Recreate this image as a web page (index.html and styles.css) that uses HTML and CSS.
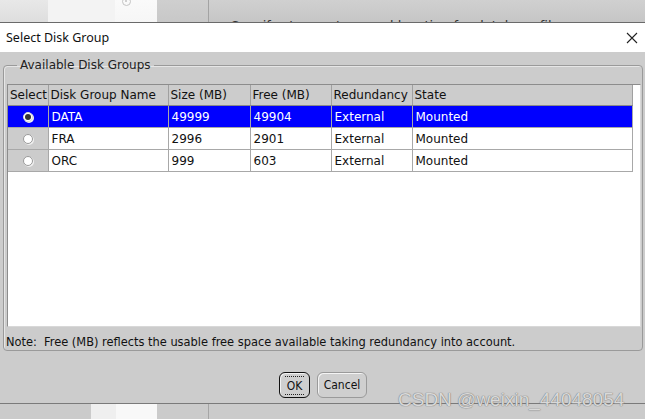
FILE: index.html
```html
<!DOCTYPE html>
<html>
<head>
<meta charset="utf-8">
<link rel="stylesheet" href="styles.css">
</head>
<body>
<div class="desk">
  <div class="desk-top">
    <div class="s s1"></div>
    <div class="s s2"></div>
    <div class="s s3"><span class="ring"></span></div>
    <div class="s s4"></div>
    <div class="s s5"><div class="hidden-text">Specify storage type and location for database files</div></div>
  </div>
  <div class="desk-mid"></div>
  <div class="desk-bottom">
    <div class="s b1"></div>
    <div class="s b2"></div>
    <div class="s b3"></div>
    <div class="s b4"></div>
    <div class="s b5"></div>
  </div>
</div>

<div class="dialog">
  <div class="titlebar">
    <span class="title">Select Disk Group</span>
    <svg class="close" width="12" height="12" viewBox="0 0 12 12"><path d="M1 1 L11 11 M11 1 L1 11" stroke="#222" stroke-width="1.1" fill="none"/></svg>
  </div>
  <div class="body">
    <fieldset class="group">
      <legend>Available Disk Groups</legend>
      <div class="tablebox">
        <table class="grid">
          <colgroup>
            <col class="c-sel"><col class="c-name"><col class="c-size"><col class="c-free"><col class="c-red"><col class="c-state">
          </colgroup>
          <thead>
            <tr>
              <th>Select</th>
              <th>Disk Group Name</th>
              <th>Size (MB)</th>
              <th>Free (MB)</th>
              <th>Redundancy</th>
              <th>State</th>
            </tr>
          </thead>
          <tbody>
            <tr class="selected">
              <td class="sel"><span class="radio on"></span></td>
              <td>DATA</td><td>49999</td><td>49904</td><td>External</td><td>Mounted</td>
            </tr>
            <tr>
              <td class="sel"><span class="radio"></span></td>
              <td>FRA</td><td>2996</td><td>2901</td><td>External</td><td>Mounted</td>
            </tr>
            <tr>
              <td class="sel"><span class="radio"></span></td>
              <td>ORC</td><td>999</td><td>603</td><td>External</td><td>Mounted</td>
            </tr>
          </tbody>
        </table>
      </div>
      <div class="note">Note:&nbsp; Free (MB) reflects the usable free space available taking redundancy into account.</div>
    </fieldset>
    <div class="buttons">
      <button class="btn ok"><span class="focus">OK</span></button>
      <button class="btn cancel">Cancel</button>
    </div>
  </div>
</div>

<div class="watermark">CSDN @weixin_44048054</div>
</body>
</html>
```

FILE: styles.css
```css
html, body {
  margin: 0;
  padding: 0;
}
body {
  width: 645px;
  height: 419px;
  overflow: hidden;
  position: relative;
  background: #cbcbcb;
  font-family: "DejaVu Sans", sans-serif;
}

/* desktop behind the dialog */
.desk {
  display: flex;
  flex-direction: column;
  height: 419px;
}
.desk-top {
  height: 22px;
  display: flex;
}
.desk-mid {
  flex: 1;
}
.desk-bottom {
  height: 16px;
  display: flex;
}
.s { height: 100%; }
.s1 { width: 48px; background: linear-gradient(#e8e8e8, #dedede); }
.s2 { width: 67px; background: #f3f3f3; }
.s3 { width: 42px; background: linear-gradient(#fafafa, #f6f6f6); position: relative; }
.s4 { width: 51px; background: linear-gradient(#cfcfcf, #c8c8c8); border-right: 1px solid #a3a3a3; }
.s5 { flex: 1; background: linear-gradient(#d0d0d0, #c6c6c6); overflow: hidden; }
.ring {
  position: absolute;
  left: 7px;
  top: -3px;
  width: 9px;
  height: 9px;
  border: 1.5px solid #c4c4c4;
  border-radius: 50%;
  box-sizing: border-box;
}
.ring::after {
  content: "";
  position: absolute;
  left: 2px;
  top: 2px;
  width: 2px;
  height: 2px;
  background: #c0c0c0;
  border-radius: 50%;
}
.hidden-text {
  margin: 19px 0 0 22px;
  font-size: 13px;
  line-height: 13px;
  color: #333;
  white-space: nowrap;
}
.b1 { width: 91px; background: #cbcbcb; }
.b2 { width: 25px; background: #efefef; }
.b3 { width: 41px; background: #f8f8f8; }
.b4 { width: 51px; background: #cbcbcb; border-right: 1px solid #a6a6a6; }
.b5 { flex: 1; background: #cbcbcb; }

/* dialog window */
.dialog {
  position: absolute;
  left: 0;
  top: 22px;
  width: 645px;
  height: 382px;
  box-sizing: border-box;
  border-top: 1px solid #6a6a6a;
  border-bottom: 1px solid #7a7a7a;
  display: flex;
  flex-direction: column;
  background: #cccccc;
}
.titlebar {
  height: 29px;
  background: #ffffff;
  display: flex;
  align-items: center;
  justify-content: space-between;
  padding: 0 7px 0 6px;
  flex: none;
}
.title {
  font-family: "Noto Sans", sans-serif;
  font-size: 12.5px;
  color: #111;
}
.close { display: block; }

.body {
  flex: 1;
  display: flex;
  flex-direction: column;
  padding: 6px 2px 0 3px;
}

.group {
  margin: 0;
  padding: 0 1px 0 3px;
  border: 1px solid #9a9a9a;
  border-radius: 4px;
  box-shadow: inset 1px 1px 0 #e6e6e6;
  min-width: 0;
}
.group legend {
  font-size: 12px;
  color: #222;
  margin-left: 10px;
  padding: 0 3px;
  line-height: 14px;
}

.tablebox {
  margin-top: 12px;
  height: 243px;
  background: #ffffff;
  border: 1px solid #8c8c8c;
  border-right-color: #d8d8d8;
  border-bottom-color: #d8d8d8;
  box-sizing: border-box;
  overflow: hidden;
}
.grid {
  border-collapse: collapse;
  table-layout: fixed;
  width: 624px;
  font-size: 12px;
}
.c-sel { width: 40px; }
.c-name { width: 120px; }
.c-size { width: 82px; }
.c-free { width: 81px; }
.c-red { width: 81px; }
.c-state { width: 220px; }
.grid th, .grid td {
  text-align: left;
  font-weight: normal;
  padding: 0 3px;
  white-space: nowrap;
  overflow: hidden;
  color: #111;
}
.grid th {
  height: 20px;
  background: #cccccc;
  border-right: 1px solid #a0a0a0;
  border-bottom: 1px solid #8a8a8a;
  padding-left: 2px;
}
.grid td {
  height: 21px;
  border-right: 1px solid #a8a8a8;
  border-bottom: 1px solid #a8a8a8;
}
.grid td.sel {
  background: #cccccc;
  text-align: center;
  padding: 0;
}
.grid tr.selected td {
  background: #0000ff;
  color: #ffffff;
}
.radio {
  display: inline-block;
  width: 10px;
  height: 10px;
  box-sizing: border-box;
  border-radius: 50%;
  border: 1px solid #9a9a9a;
  background: #ffffff;
  vertical-align: middle;
  position: relative;
  box-shadow: 1px 1px 0 #f0f0f0;
}
.radio.on {
  border-color: #d8d8d8;
  background: #ffffff;
}
.radio.on::after {
  content: "";
  position: absolute;
  left: 1px;
  top: 1px;
  width: 6px;
  height: 6px;
  border-radius: 50%;
  background: #333;
}

.note {
  font-family: "DejaVu Sans Condensed", "Liberation Sans Narrow", sans-serif;
  font-size: 12.7px;
  color: #111;
  margin: 7px 0 1px -1px;
  height: 15px;
  line-height: 15px;
  white-space: nowrap;
}

.buttons {
  display: flex;
  justify-content: center;
  gap: 7px;
  margin-top: 21px;
}
.btn {
  height: 26px;
  margin: 0;
  padding: 0;
  font-family: "DejaVu Sans Condensed", "DejaVu Sans", sans-serif;
  font-size: 12px;
  color: #111;
  background: #cfcfcf;
  border-radius: 6px;
  box-sizing: border-box;
}
.ok {
  width: 31px;
  border: 1px solid #111;
  box-shadow: inset 1px 1px 0 #f2f2f2;
}
.focus {
  display: inline-block;
  padding: 2px 2px 1px;
  border-top: 1px dotted #222;
  border-bottom: 1px dotted #222;
  line-height: 14px;
}
.cancel {
  width: 50px;
  border: 1px solid #9a9a9a;
  box-shadow: inset 1px 1px 0 #f4f4f4;
}

.watermark {
  position: absolute;
  left: 398px;
  top: 389px;
  font-family: "Liberation Sans", sans-serif;
  font-size: 19px;
  color: rgba(235, 235, 235, 0.85);
  text-shadow: 0 0 1px #777, 0 0 1px #777;
  white-space: nowrap;
}
```
